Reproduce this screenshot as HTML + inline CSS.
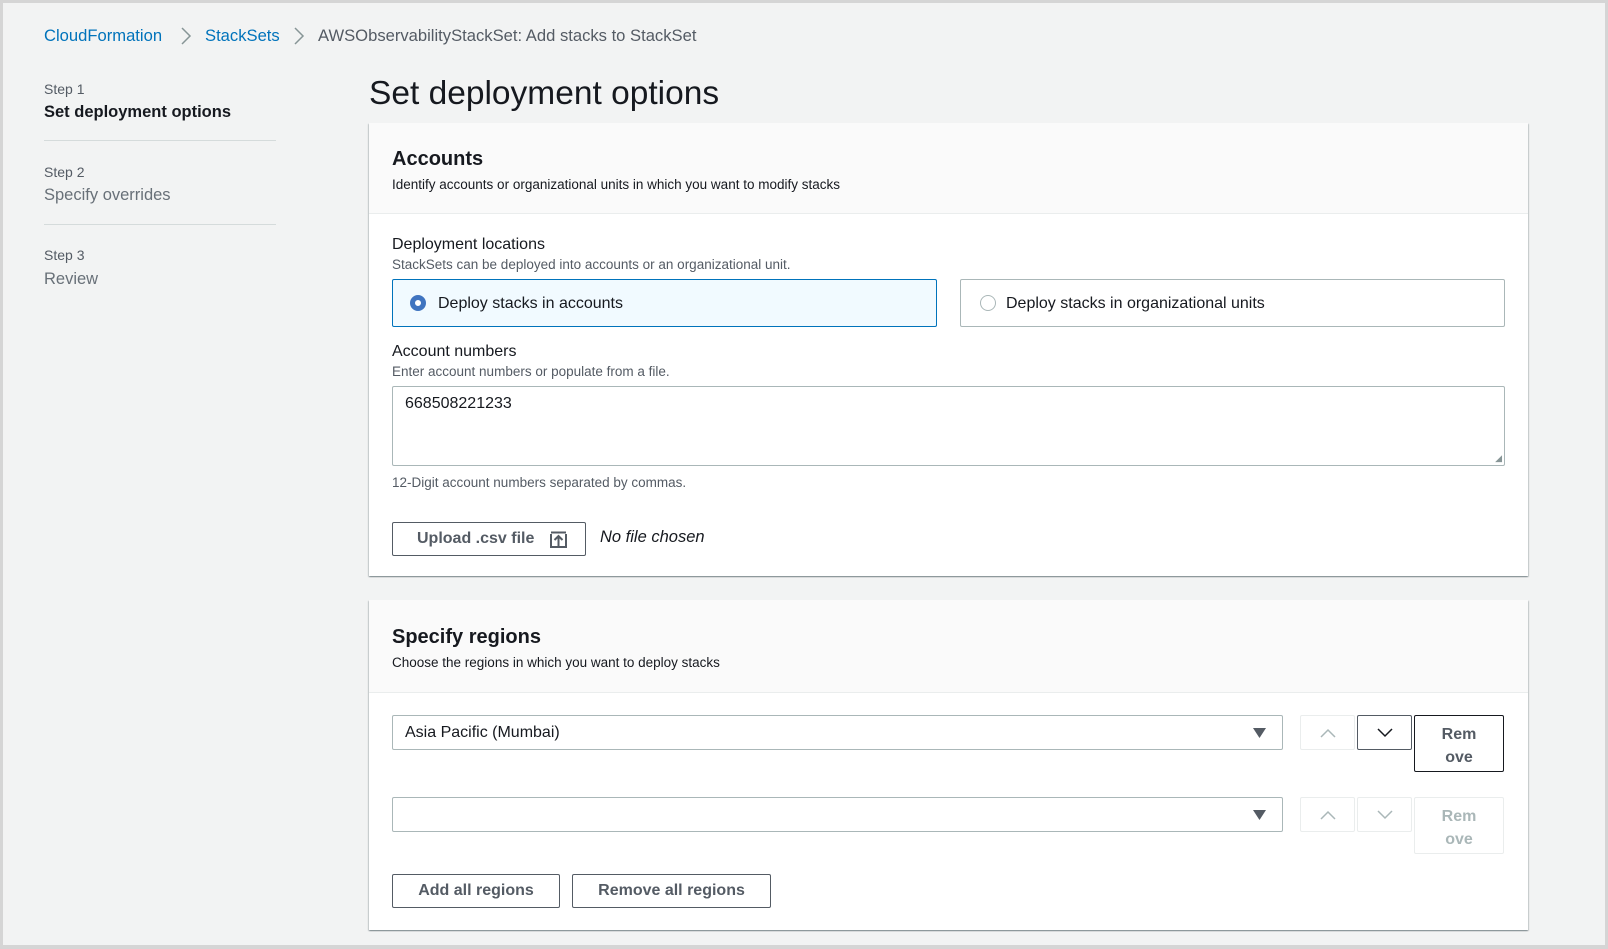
<!DOCTYPE html>
<html><head><meta charset="utf-8"><style>
*{box-sizing:border-box;margin:0;padding:0}
body{width:1608px;height:949px;background:#f2f3f3;font-family:"Liberation Sans",sans-serif;color:#16191f;position:relative;overflow:hidden;border:3px solid #d5d5d5;border-bottom-width:4px}
.a{position:absolute;white-space:nowrap}
.bc{top:23px;font-size:16.6px}
.link{color:#0073bb}
.grey{color:#687078}
.div{position:absolute;left:41px;width:232px;height:1px;background:#d5dbdb}
.card{position:absolute;left:366px;width:1159px;background:#fff;box-shadow:0 1px 1px rgba(0,28,36,.3),1px 1px 1px rgba(0,28,36,.15),-1px 1px 1px rgba(0,28,36,.15)}
.hd{position:absolute;left:0;right:0;top:0;background:#fafafa;border-bottom:1px solid #eaeded}
.btn{position:absolute;border:1px solid #545b64;border-radius:2px;background:#fff;font-weight:bold;color:#545b64;font-size:16px;text-align:center}
.box{position:absolute;border:1px solid #aab7b8;border-radius:2px;background:#fff}
.small{font-size:13.5px;color:#545b64}
.chev{position:absolute;top:24px}
</style></head><body>
<div class="a bc link" style="left:41px">CloudFormation</div>
<svg class="chev" style="left:177px" width="12" height="18"><path d="M2 1L10 9L2 17" fill="none" stroke="#879596" stroke-width="1.5"/></svg>
<div class="a bc link" style="left:202px">StackSets</div>
<svg class="chev" style="left:290px" width="12" height="18"><path d="M2 1L10 9L2 17" fill="none" stroke="#879596" stroke-width="1.5"/></svg>
<div class="a bc" style="left:315px;color:#545b64">AWSObservabilityStackSet: Add stacks to StackSet</div>

<div class="a grey" style="left:41px;top:78px;font-size:14px;color:#545b64">Step 1</div>
<div class="a" style="left:41px;top:100px;font-size:16.5px;font-weight:bold">Set deployment options</div>
<div class="div" style="top:137px"></div>
<div class="a" style="left:41px;top:161px;font-size:14px;color:#545b64">Step 2</div>
<div class="a grey" style="left:41px;top:183px;font-size:16.5px">Specify overrides</div>
<div class="div" style="top:221px"></div>
<div class="a" style="left:41px;top:244px;font-size:14px;color:#545b64">Step 3</div>
<div class="a grey" style="left:41px;top:267px;font-size:16.5px">Review</div>

<div class="a" style="left:366px;top:72px;font-size:33.5px">Set deployment options</div>

<div class="card" style="top:120px;height:453px">
 <div class="hd" style="height:91px"></div>
 <div class="a" style="left:23px;top:25px;font-size:20px;font-weight:bold">Accounts</div>
 <div class="a small" style="left:23px;top:54px;color:#16191f">Identify accounts or organizational units in which you want to modify stacks</div>
 <div class="a" style="left:23px;top:113px;font-size:16px">Deployment locations</div>
 <div class="a small" style="left:23px;top:134px">StackSets can be deployed into accounts or an organizational unit.</div>
 <div class="box" style="left:23px;top:156px;width:545px;height:48px;background:#f1faff;border-color:#0073bb">
  <div class="a" style="left:17px;top:15px;width:16px;height:16px;border-radius:50%;border:5px solid #3f74c0;background:#fff"></div>
  <div class="a" style="left:45px;top:15px;font-size:16px">Deploy stacks in accounts</div></div>
 <div class="box" style="left:591px;top:156px;width:545px;height:48px">
  <div class="a" style="left:19px;top:15px;width:16px;height:16px;border-radius:50%;border:1px solid #aab7b8"></div>
  <div class="a" style="left:45px;top:15px;font-size:16px">Deploy stacks in organizational units</div></div>
 <div class="a" style="left:23px;top:220px;font-size:16px">Account numbers</div>
 <div class="a small" style="left:23px;top:241px">Enter account numbers or populate from a file.</div>
 <div class="box" style="left:23px;top:263px;width:1113px;height:80px">
  <div class="a" style="left:12px;top:8px;font-size:16px">668508221233</div>
  <div class="a" style="right:2px;bottom:1px;font-size:9px;color:#879596">◢</div></div>
 <div class="a small" style="left:23px;top:352px">12-Digit account numbers separated by commas.</div>
 <div class="btn" style="left:23px;top:399px;width:194px;height:34px;text-align:left;padding:7px 0 0 24px">Upload .csv file
  <svg class="a" style="left:157px;top:8px" width="17" height="17" viewBox="0 0 17 17"><path d="M1 3V16H16V3" fill="none" stroke="#545b64" stroke-width="2"/><path d="M8.5 15V5M4.5 9L8.5 5L12.5 9" fill="none" stroke="#545b64" stroke-width="2"/><path d="M1 1.5H16" stroke="#545b64" stroke-width="2"/></svg></div>
 <div class="a" style="left:231px;top:405px;font-size:16.5px;font-style:italic">No file chosen</div>
</div>

<div class="card" style="top:597px;height:330px">
 <div class="hd" style="height:93px"></div>
 <div class="a" style="left:23px;top:26px;font-size:20px;font-weight:bold">Specify regions</div>
 <div class="a small" style="left:23px;top:55px;color:#16191f">Choose the regions in which you want to deploy stacks</div>
 <div class="box" style="left:23px;top:115px;width:891px;height:35px">
  <div class="a" style="left:12px;top:8px;font-size:16px">Asia Pacific (Mumbai)</div>
  <svg class="a" style="right:16px;top:12px" width="13" height="11"><path d="M0 0H13L6.5 10Z" fill="#545b64"/></svg></div>
 <div class="box" style="left:931px;top:115px;width:55px;height:35px;border-color:#eaeded"><svg class="a" style="left:18px;top:11px" width="18" height="12"><path d="M2 10L9 3L16 10" fill="none" stroke="#aab7b8" stroke-width="1.5"/></svg></div>
 <div class="box" style="left:988px;top:115px;width:55px;height:35px;border-color:#545b64"><svg class="a" style="left:18px;top:11px" width="18" height="12"><path d="M2 2L9 9L16 2" fill="none" stroke="#16191f" stroke-width="1.5"/></svg></div>
 <div class="btn" style="left:1045px;top:115px;width:90px;height:57px;border-color:#16191f;padding-top:7px;line-height:23px">Rem<br>ove</div>
 <div class="box" style="left:23px;top:197px;width:891px;height:35px">
  <svg class="a" style="right:16px;top:12px" width="13" height="11"><path d="M0 0H13L6.5 10Z" fill="#545b64"/></svg></div>
 <div class="box" style="left:931px;top:197px;width:55px;height:35px;border-color:#eaeded"><svg class="a" style="left:18px;top:11px" width="18" height="12"><path d="M2 10L9 3L16 10" fill="none" stroke="#aab7b8" stroke-width="1.5"/></svg></div>
 <div class="box" style="left:988px;top:197px;width:55px;height:35px;border-color:#eaeded"><svg class="a" style="left:18px;top:11px" width="18" height="12"><path d="M2 2L9 9L16 2" fill="none" stroke="#aab7b8" stroke-width="1.5"/></svg></div>
 <div class="btn" style="left:1045px;top:197px;width:90px;height:57px;border-color:#eaeded;color:#aab7b8;padding-top:7px;line-height:23px">Rem<br>ove</div>
 <div class="btn" style="left:23px;top:274px;width:168px;height:34px;padding-top:7px">Add all regions</div>
 <div class="btn" style="left:203px;top:274px;width:199px;height:34px;padding-top:7px">Remove all regions</div>
</div>
</body></html>
